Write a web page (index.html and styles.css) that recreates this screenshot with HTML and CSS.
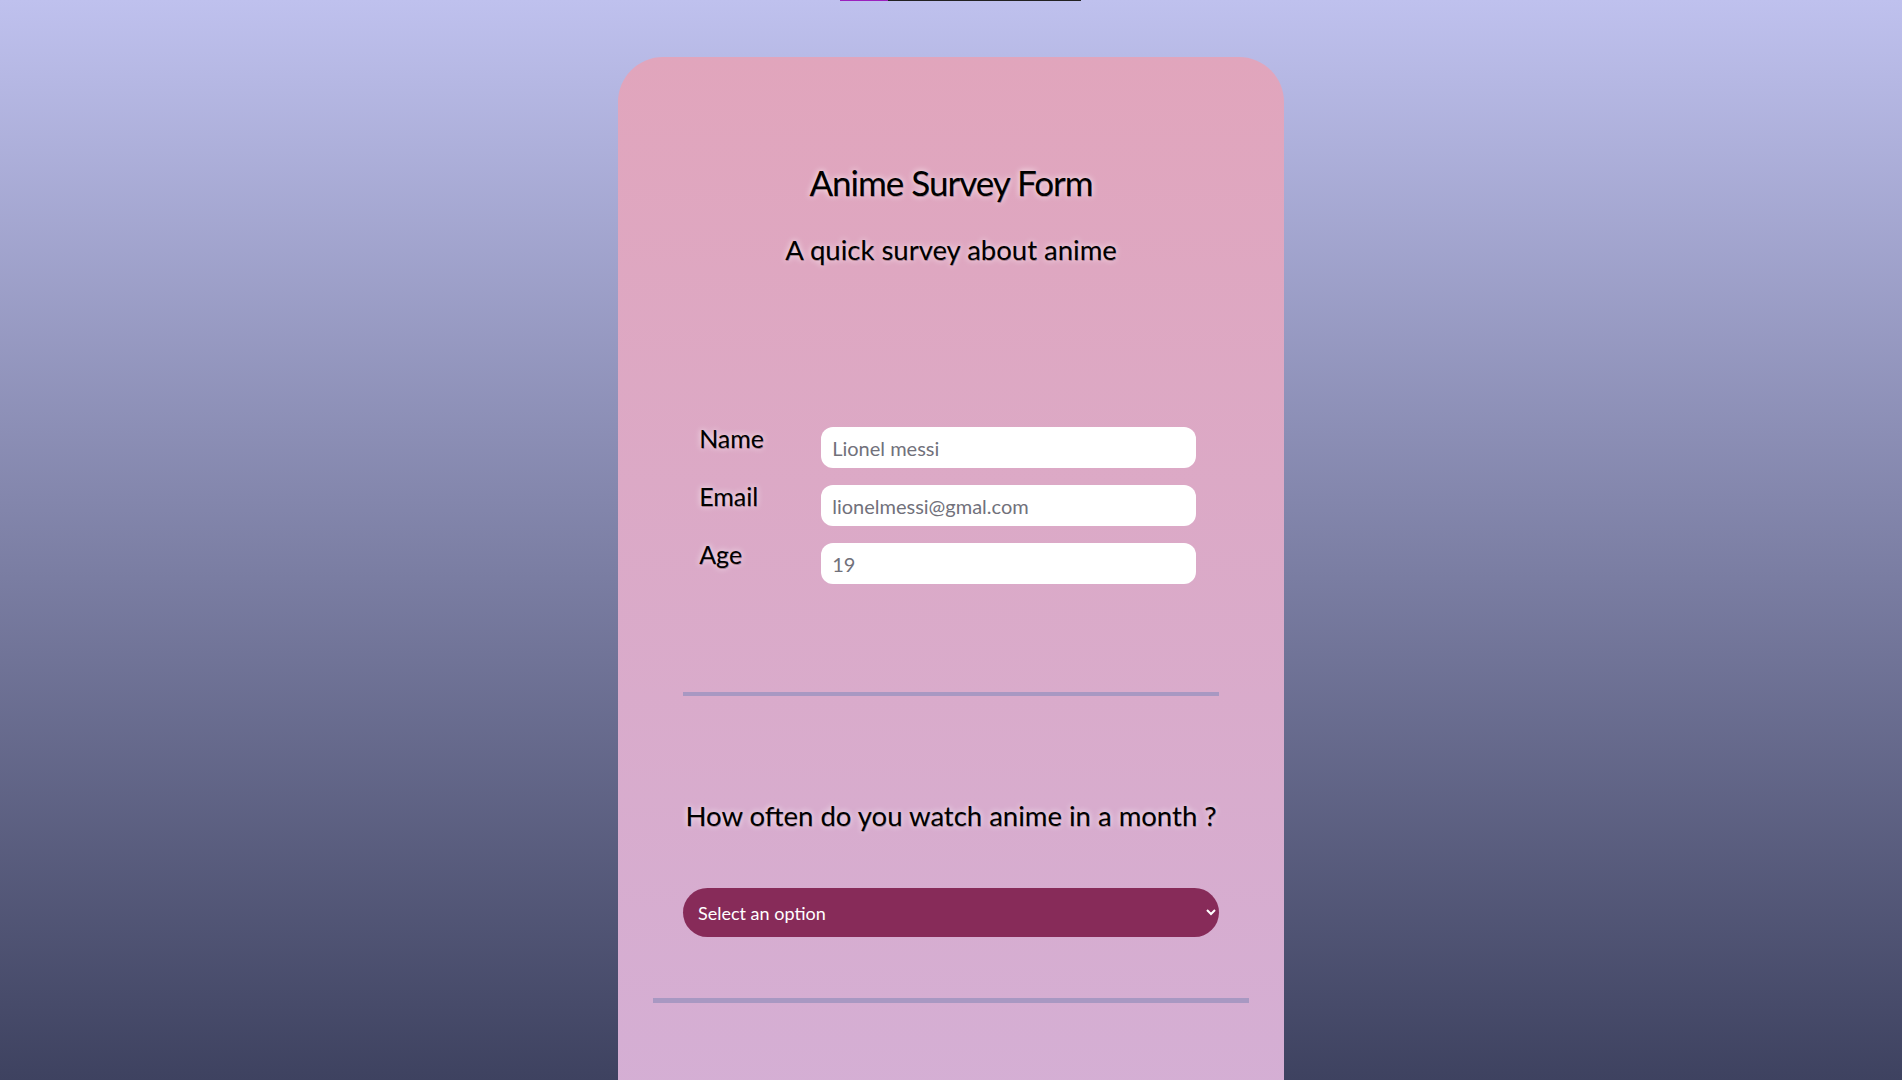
FILE: index.html
```html
<!DOCTYPE html>
<html lang="en">
<head>
  <meta charset="UTF-8" />
  <meta name="viewport" content="width=device-width, initial-scale=1.0"/>
  <title>Anime Survey Form</title>
  <link rel="stylesheet" href="styles.css">
</head>

<body>
  <div class="progress">
    <div class="progress-fill"></div>
  </div>

  <main class="card">
    <h1 id="title">Anime Survey Form</h1>
    <p id="description">A quick survey about anime</p>

    <form id="survey-form">
      <div class="fields">
        <label for="name" id="name-label">Name</label>
        <input type="text" id="name" placeholder="Lionel messi" required>

        <label for="email" id="email-label">Email</label>
        <input type="email" id="email" placeholder="lionelmessi@gmal.com" required>

        <label for="number" id="number-label">Age</label>
        <input type="number" id="number" min="5" max="99" placeholder="19">
      </div>

      <div class="divider"></div>

      <p class="question">How often do you watch anime in a month ?</p>
      <select id="dropdown">
        <option value="">Select an option</option>
        <option value="daily">Every day</option>
        <option value="weekly">A few times a week</option>
        <option value="rarely">Rarely</option>
      </select>

      <div class="divider wide"></div>
    </form>
  </main>
</body>
</html>
```

FILE: styles.css
```css
/* Basic Reset */
* {
  margin: 0;
  padding: 0;
  box-sizing: border-box;
}

body {
  min-height: 100vh;
  font-family: Lato, "Open Sans", sans-serif;
  color: #000;
  background: linear-gradient(#bfc1ee, #3e4260) fixed;
}

/* PROGRESS BAR AT THE TOP */
.progress {
  display: flex;
  width: 241px;
  height: 1px;
  margin-left: 840px;
  background-color: #222;
}
.progress-fill {
  width: 48px;
  background-color: #9b22bd;
}

/* SURVEY CARD */
.card {
  width: 35%;
  margin: 56px auto 0;
  padding: 105px 0 120px;
  border-radius: 45px 45px 0 0;
  background: linear-gradient(#e1a5bc, #d4afd5);
  display: flex;
  flex-direction: column;
  align-items: center;
}

#title,
#description,
.question,
.fields label {
  text-shadow: 0.5px 0.5px 0.5px rgba(60, 20, 30, 0.35), 0 0 6px rgba(255, 255, 255, 0.95);
}

#title {
  font-size: 35px;
  font-weight: 400;
  letter-spacing: -1px;
  line-height: 40px;
}

#description {
  margin-top: 31px;
  font-size: 27.5px;
  line-height: 34px;
}

form {
  width: 100%;
  display: flex;
  flex-direction: column;
  align-items: center;
}

/* NAME / EMAIL / AGE */
.fields {
  align-self: flex-start;
  margin: 160px 0 0 81px;
  display: grid;
  grid-template-columns: 122px 375px;
  row-gap: 17px;
}
.fields label {
  font-size: 25px;
  line-height: 23px;
}
.fields input {
  height: 41px;
  padding: 0 11px;
  border: none;
  border-radius: 12px;
  background-color: #fff;
  font-family: inherit;
  font-size: 20px;
  outline: none;
}
.fields input::placeholder {
  color: #71717b;
}
.fields input::-webkit-inner-spin-button {
  display: none;
}

/* SEPARATORS */
.divider {
  width: 536px;
  height: 4px;
  margin-top: 108px;
  background-color: #a898c2;
}
.divider.wide {
  width: 596px;
  height: 5px;
  margin-top: 61px;
}

.question {
  margin-top: 103px;
  font-size: 27.5px;
  line-height: 34px;
}

#dropdown {
  width: 536px;
  height: 49px;
  margin-top: 55px;
  padding: 0 6px 0 11px;
  border: none;
  border-radius: 25px;
  background-color: #872b59;
  color: #fff;
  font-family: inherit;
  font-size: 18px;
  outline: none;
}
```
